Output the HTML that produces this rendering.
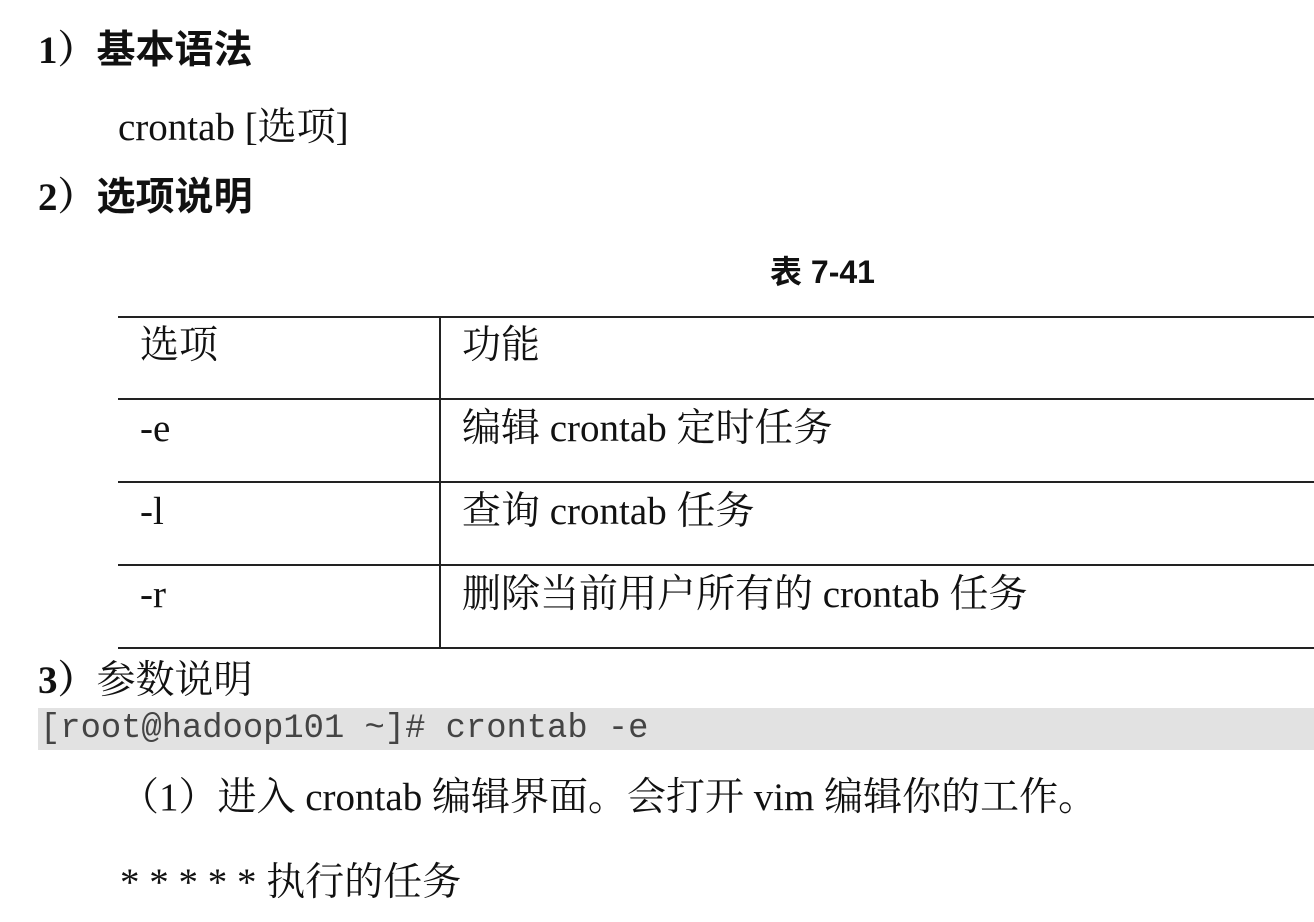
<!DOCTYPE html>
<html><head><meta charset="utf-8"><style>
body{margin:0;width:1314px;height:922px;background:#fff;position:relative;overflow:hidden;color:#111;font-family:"Liberation Serif","Noto Serif CJK SC",serif;}
.t{position:absolute;white-space:nowrap;line-height:1;}
.h{font-size:39px;font-weight:bold;}
.h span{font-family:"Liberation Serif","Noto Sans CJK SC",sans-serif;font-weight:bold;}
.n{font-size:39px;}
.hl{position:absolute;left:118px;right:0;height:2px;background:#222;}
.vl{position:absolute;left:439px;top:317px;width:2px;height:332px;background:#222;}
</style></head><body>
<div class="t h" style="left:38px;top:31px">1）<span>基本语法</span></div>
<div class="t n" style="left:118px;top:108px">crontab [选项]</div>
<div class="t h" style="left:38px;top:178px">2）<span>选项说明</span></div>
<div class="t" style="left:770px;top:256px;font-size:32px;font-family:'Liberation Sans','Noto Sans CJK SC',sans-serif;font-weight:bold">表 7-41</div>
<div class="hl" style="top:316px"></div>
<div class="hl" style="top:398px"></div>
<div class="hl" style="top:481px"></div>
<div class="hl" style="top:564px"></div>
<div class="hl" style="top:647px"></div>
<div class="vl"></div>
<div class="t n" style="left:140px;top:326px">选项</div>
<div class="t n" style="left:462px;top:326px">功能</div>
<div class="t n" style="left:140px;top:409px">-e</div>
<div class="t n" style="left:462px;top:409px">编辑 crontab 定时任务</div>
<div class="t n" style="left:140px;top:492px">-l</div>
<div class="t n" style="left:462px;top:492px">查询 crontab 任务</div>
<div class="t n" style="left:140px;top:575px">-r</div>
<div class="t n" style="left:462px;top:575px">删除当前用户所有的 crontab 任务</div>
<div class="t" style="left:38px;top:661px;font-size:39px"><b>3）</b>参数说明</div>
<div style="position:absolute;left:38px;right:0;top:708px;height:42px;background:#e2e2e2"></div>
<div class="t" style="left:40px;top:713px;font-size:33.8px;font-family:'Liberation Mono',monospace;color:#444">[root@hadoop101 ~]# crontab -e</div>
<div class="t n" style="left:120px;top:778px">（1）进入 crontab 编辑界面。会打开 vim 编辑你的工作。</div>
<div class="t n" style="left:120px;top:863px">* * * * * 执行的任务</div>
</body></html>
